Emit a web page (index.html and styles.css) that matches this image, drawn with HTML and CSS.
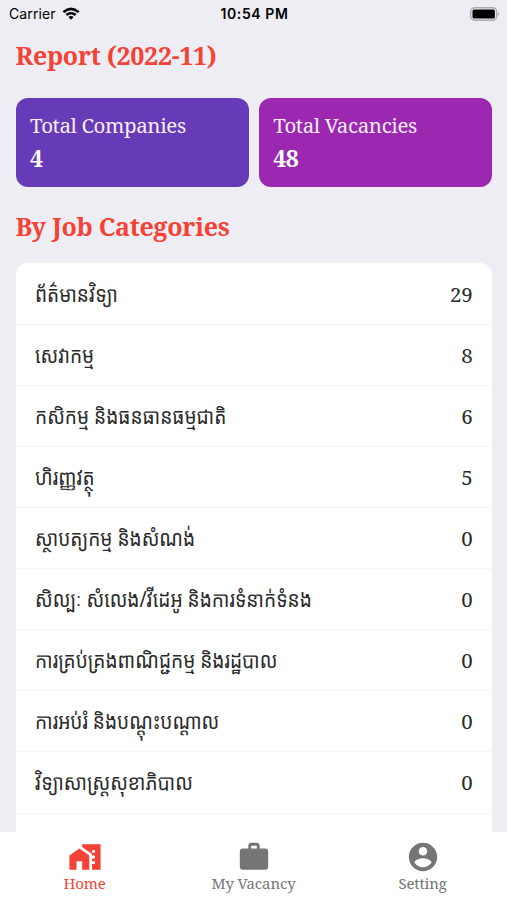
FILE: index.html
```html
<!DOCTYPE html>
<html lang="km">
<head>
<meta charset="utf-8">
<title>Report</title>
<link rel="stylesheet" href="styles.css">
</head>
<body>
<div class="screen">
  <header class="status">
    <div class="carrier"><span>Carrier</span>
      <svg class="wifi" viewBox="0 0 18 13"><path d="M0.500 4.200Q9-3 17.500 4.200L15.700 6Q9 .5 2.300 6ZM3.400 7.100Q9 2.700 14.600 7.100L12.700 9Q9 6.100 5.300 9ZM6.300 10Q9 8 11.700 10L9 12.800Z"/></svg>
    </div>
    <div class="clock">10:54 PM</div>
    <svg class="battery" viewBox="0 0 30 14"><rect x="0.700" y=".7" width="26" height="12.600" rx="4" fill="none" stroke="#aaa" stroke-width="1.400"/><rect x="2.500" y="2.500" width="22.400" height="9" rx="1.500"/><path d="M28 5Q30.500 7 28 9Z" fill="#aaa"/></svg>
  </header>
  <main>
    <h1>Report (2022-11)</h1>
    <section class="cards">
      <div class="card companies"><span>Total Companies</span><b>4</b></div>
      <div class="card vacancies"><span>Total Vacancies</span><b>48</b></div>
    </section>
    <h2>By Job Categories</h2>
    <ul class="list">
      <li><span>ព័ត៌មានវិទ្យា</span><em>29</em></li>
      <li><span>សេវាកម្ម</span><em>8</em></li>
      <li><span>កសិកម្ម និងធនធានធម្មជាតិ</span><em>6</em></li>
      <li><span>ហិរញ្ញវត្ថុ</span><em>5</em></li>
      <li><span>ស្ថាបត្យកម្ម និងសំណង់</span><em>0</em></li>
      <li><span>សិល្បៈ សំលេង/វីដេអូ និងការទំនាក់ទំនង</span><em>0</em></li>
      <li><span>ការគ្រប់គ្រងពាណិជ្ជកម្ម និងរដ្ឋបាល</span><em>0</em></li>
      <li><span>ការអប់រំ និងបណ្តុះបណ្តាល</span><em>0</em></li>
      <li><span>វិទ្យាសាស្រ្តសុខាភិបាល</span><em>0</em></li>
      <li></li>
    </ul>
  </main>
  <nav>
    <a class="active"><svg viewBox="0 0 24 24"><path d="M1 11v10h5v-6h4v6h5V11L8 6z"/><path d="M10 3v1.970l7 5V11h2v2h-2v2h2v2h-2v4h6V3H10zm9 6h-2V7h2v2z"/></svg><span>Home</span></a>
    <a><svg viewBox="0 0 24 24"><path d="M20 6h-4V4c0-1.110-.89-2-2-2h-4c-1.110 0-2 .89-2 2v2H4c-1.110 0-2 .89-2 2v11c0 1.110.89 2 2 2h16c1.110 0 2-.89 2-2V8c0-1.110-.89-2-2-2zm-6 0h-4V4h4v2z"/></svg><span>My Vacancy</span></a>
    <a><svg viewBox="0 0 24 24"><path d="M12 2C6.480 2 2 6.480 2 12s4.480 10 10 10 10-4.480 10-10S17.520 2 12 2zm0 3c1.660 0 3 1.340 3 3s-1.340 3-3 3-3-1.340-3-3 1.340-3 3-3zm0 14.200c-2.500 0-4.710-1.280-6-3.220.03-1.990 4-3.080 6-3.080 1.990 0 5.970 1.090 6 3.080-1.290 1.940-3.500 3.220-6 3.220z"/></svg><span>Setting</span></a>
  </nav>
</div>
</body>
</html>
```
FILE: styles.css
```css
* { box-sizing: border-box; }
body { margin: 0; background: #eeedf3; font-family: "Droid Serif", "Noto Serif", "DejaVu Serif", serif; }
.screen { height: 900px; display: flex; flex-direction: column; overflow: hidden; }
.status { height: 27px; flex: none; display: grid; grid-template-columns: 1fr auto 1fr; align-items: center; padding: 0 7px 0 9px; font-family: Inter, sans-serif; font-size: 14px; }
.carrier { display: flex; align-items: center; gap: 6px; letter-spacing: 0.1px; }
.wifi { width: 18px; height: 13px; }
.clock { font-weight: 600; letter-spacing: 0.6px; }
.battery { width: 30px; height: 14px; justify-self: end; }
main { flex: 1; min-height: 0; overflow: hidden; padding: 0 15px 0 15.500px; }
h1, h2 { margin: 0; color: #f44336; font-size: 25px; letter-spacing: -0.3px; line-height: 32px; }
h1 { margin-top: 12px; }
.cards { display: grid; grid-template-columns: 1fr 1fr; gap: 10px; margin-top: 26.500px; }
.card { height: 89px; border-radius: 12px; padding: 12px 14.500px; display: flex; flex-direction: column; font-size: 20.500px; letter-spacing: -0.400px; line-height: 30px; }
.card span { color: #f7eefa; }
.card b { color: #fff; font-size: 23px; line-height: 37px; }
.companies { background: #673ab7; }
.vacancies { background: #9c27b0; }
h2 { margin-top: 23.500px; }
.list { list-style: none; margin: 21px 0 0; padding: 0.700px 0 0; background: #fff; border-radius: 12px 12px 0 0; }
li { height: 61.100px; border-bottom: 1px solid #f5f5f7; padding: 0 19.500px; display: flex; align-items: center; justify-content: space-between; font-size: 20.500px; color: #2a2a2a; }
li span { font-family: "Noto Sans Khmer", "Khmer OS", "Noto Sans", sans-serif; font-size: 21.500px; line-height: 30px; transform: scaleX(0.888); transform-origin: left center; }
em { font-style: normal; letter-spacing: -0.2px; }
nav { height: 68px; flex: none; background: #fff; display: grid; grid-template-columns: repeat(3, 1fr); }
nav a { display: flex; flex-direction: column; align-items: center; padding-top: 8px; color: #757575; font-size: 15px; letter-spacing: -0.150px; line-height: 19px; }
nav svg { width: 34px; height: 34px; fill: currentColor; }
nav .active { color: #f44336; }
```
